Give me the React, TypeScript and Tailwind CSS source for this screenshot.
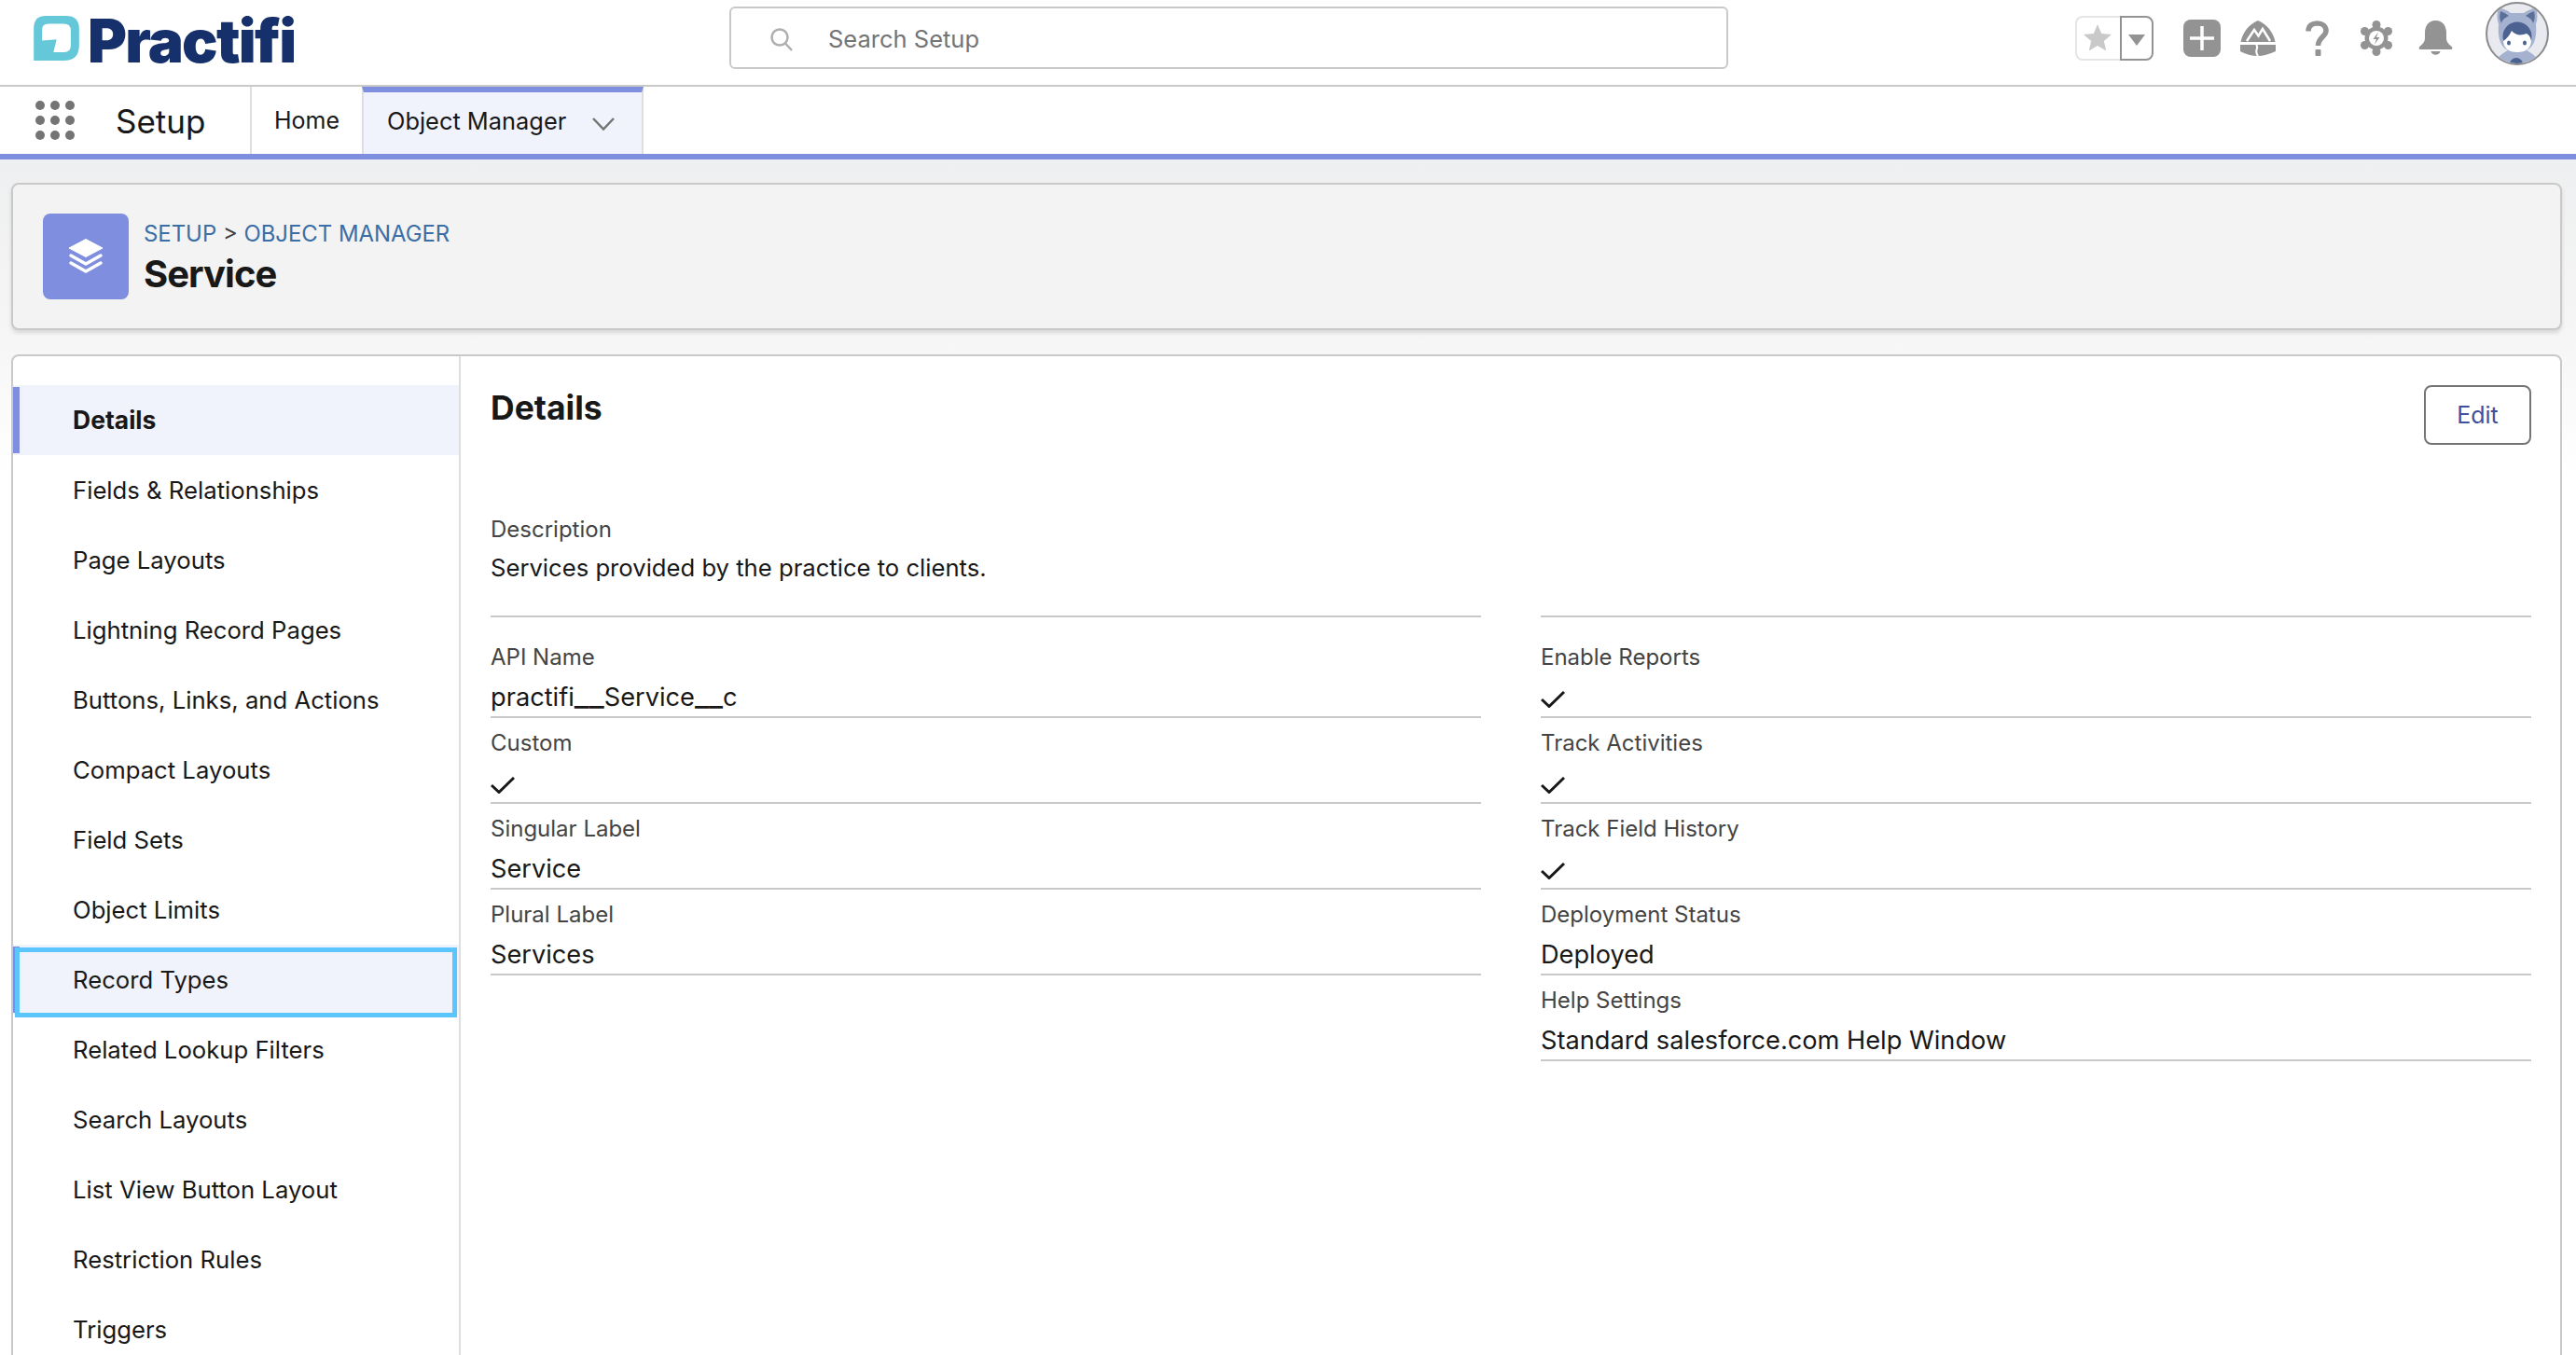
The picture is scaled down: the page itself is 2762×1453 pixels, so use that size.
import type { ReactNode } from 'react'

const sideItems = [
  'Details',
  'Fields & Relationships',
  'Page Layouts',
  'Lightning Record Pages',
  'Buttons, Links, and Actions',
  'Compact Layouts',
  'Field Sets',
  'Object Limits',
  'Record Types',
  'Related Lookup Filters',
  'Search Layouts',
  'List View Button Layout',
  'Restriction Rules',
  'Triggers',
]

const leftFields: { label: string; value?: ReactNode; check?: boolean }[] = [
  {
    label: 'API Name',
    value: (
      <>
        practifi<span className="text-[35px] leading-[0]">__</span>Service<span className="text-[33px] leading-[0]">__</span>c
      </>
    ),
  },
  { label: 'Custom', check: true },
  { label: 'Singular Label', value: 'Service' },
  { label: 'Plural Label', value: 'Services' },
]

const rightFields: { label: string; value?: ReactNode; check?: boolean }[] = [
  { label: 'Enable Reports', check: true },
  { label: 'Track Activities', check: true },
  { label: 'Track Field History', check: true },
  { label: 'Deployment Status', value: 'Deployed' },
  { label: 'Help Settings', value: 'Standard salesforce.com Help Window' },
]

const Field = ({ label, value, check }: { label: string; value?: ReactNode; check?: boolean }) => (
  <div className="h-[92px] border-b-2 border-[#c9c9c9] pt-[13px]">
    <div className="text-[24px] leading-[28px] text-[#444444]">{label}</div>
    {check ? (
      <div className="mt-[13px] flex h-[32px] items-center pt-[4px]">
        <svg width="26" height="18" viewBox="0 0 26 18" fill="none" stroke="#181818" strokeWidth="3">
          <path d="M1 9l8 7.5L25 1" />
        </svg>
      </div>
    ) : (
      <div className="mt-[13px] h-[32px] text-[27.2px] leading-[32px] text-[#181818]">{value}</div>
    )}
  </div>
)

const Logo = () => (
  <div className="flex items-start">
    <svg width="49" height="48" viewBox="0 0 147 145" className="mt-[16px] ml-[36px]">
      <path d="M0 145V40Q0 0 40 0H105Q147 0 147 42V95Q147 145 97 145Z" fill="#65c8d9" />
      <path d="M27 80V45Q27 26 48 26H98Q120 26 120 48V96Q120 118 98 118H64L74 76Z" fill="#fff" />
    </svg>
    <span className="mt-[7px] ml-[9px] text-[64px] leading-[72px] font-black tracking-[-1.75px] text-[#16306b]">Practifi</span>
  </div>
)

const Avatar = () => (
  <svg width="68" height="68" viewBox="0 0 68 68" className="mb-[9px] ml-[35px]">
    <defs>
      <clipPath id="av"><circle cx="34" cy="34" r="32" /></clipPath>
    </defs>
    <circle cx="34" cy="34" r="33" fill="#e8eaf0" stroke="#8c8c8c" strokeWidth="2" />
    <g clipPath="url(#av)">
      <path d="M14 6Q24 9 27 12H41Q45 9 54 6Q57 16 54 24Q56 46 44 52Q52 56 56 62V70H12V62Q16 56 24 52Q12 46 14 24Q11 16 14 6Z" fill="#a4b2cf" />
      <path d="M16 10Q22 12 25 15Q18 18 17 23Q14 18 16 10Z" fill="#5b6f98" />
      <path d="M52 10Q46 12 43 15Q50 18 51 23Q54 18 52 10Z" fill="#5b6f98" />
      <circle cx="34" cy="37" r="15.5" fill="#4c6290" />
      <path d="M19 42Q25 38 28 31Q34 38 44 34Q48 36 49 42Q48 54 34 54Q20 54 19 42Z" fill="#fff" />
      <ellipse cx="25" cy="44" rx="2" ry="2.6" fill="#4c6290" />
      <ellipse cx="42" cy="44" rx="2" ry="2.6" fill="#4c6290" />
      <circle cx="33" cy="67" r="7" fill="#4c6290" />
    </g>
  </svg>
)

const HeaderIcons = () => (
  <div className="flex items-center text-[#939393]">
    <div className="flex h-[48px] w-[84px]">
      <div className="flex w-[48px] items-center justify-center rounded-l-[8px] border-2 border-r-0 border-[#e5e5e5]">
        <svg width="30" height="29" viewBox="0 0 30 29" className="mr-[2px]">
          <path d="M15 0l4.2 10 10.8.9-8.2 7.1 2.5 10.6L15 23l-9.3 5.6L8.2 18 0 10.9 10.8 10z" fill="#c9c9c9" />
        </svg>
      </div>
      <div className="flex w-[36px] items-center justify-center rounded-r-[8px] border-2 border-[#939393]">
        <svg width="18" height="12" viewBox="0 0 18 12" className="mt-[4px]">
          <path d="M0 0H18L9 12Z" fill="#939393" />
        </svg>
      </div>
    </div>
    <svg width="40" height="40" viewBox="0 0 40 40" className="ml-[32px]">
      <rect width="40" height="40" rx="8" fill="#939393" />
      <path d="M20 7V33M7 20H33" stroke="#fff" strokeWidth="3.5" />
    </svg>
    <svg width="38" height="38" viewBox="0 0 38 38" className="ml-[21px]">
      <path d="M19 0C9 4 2.500 13 .5 23H37.500C35.500 13 29 4 19 0Z" fill="#939393" />
      <path d="M7 22L15 10l4.500 6.500L24 9l8 13" fill="none" stroke="#fff" strokeWidth="2.500" />
      <path d="M0 26H38V33Q27 38 19 38Q9 38 0 33Z" fill="#939393" />
      <path d="M17 26C21 30 14 31 19 38" fill="none" stroke="#fff" strokeWidth="2" />
    </svg>
    <svg width="25" height="38" viewBox="0 0 25 38" className="ml-[32px]">
      <path d="M3 11.500C3 5.500 7 3 12.500 3S22 6 22 11C22 17.500 13.500 18 13.500 27" fill="none" stroke="#939393" strokeWidth="5.500" />
      <rect x="10.500" y="31" width="6" height="7" rx="1" fill="#939393" />
    </svg>
    <svg width="34" height="38" viewBox="0 0 34 38" className="ml-[34px]">
      <circle cx="17" cy="19" r="12.500" fill="#939393" />
      <circle cx="17" cy="4.500" r="4.500" fill="#939393" />
      <circle cx="17" cy="33.500" r="4.500" fill="#939393" />
      <circle cx="4.500" cy="11.500" r="4.500" fill="#939393" />
      <circle cx="29.500" cy="11.500" r="4.500" fill="#939393" />
      <circle cx="4.500" cy="26.500" r="4.500" fill="#939393" />
      <circle cx="29.500" cy="26.500" r="4.500" fill="#939393" />
      <circle cx="17" cy="19" r="8" fill="#fff" />
      <path d="M19 12.500L13.500 20H17L15 25.500L20.500 18H17Z" fill="#939393" />
    </svg>
    <svg width="37" height="37" viewBox="0 0 37 37" className="ml-[28px]">
      <path d="M18.500 0C10 0 7 7 7 13V19C7 24 3 26 1 28.500Q0 31 2 31H35Q37 31 36 28.500C34 26 30 24 30 19V13C30 7 27 0 18.500 0Z" fill="#939393" />
      <path d="M13.500 33H23.500C22.500 38 14.500 38 13.500 33Z" fill="#939393" />
    </svg>
    <Avatar />
  </div>
)

const App = () => {
  return (
    <div className="h-[1453px] w-[2762px] overflow-hidden bg-white font-['Inter',sans-serif] text-[#181818]">
      {/* top bar */}
      <header className="flex h-[93px] items-center justify-between border-b-2 border-[#c9c9c9] pb-[10px]">
        <div className="flex w-[782px]">
          <Logo />
        </div>
        <div className="flex h-[67px] w-[1071px] items-center rounded-[6px] border-2 border-[#c9c9c9] pt-[3px] pl-[41px]">
          <svg width="26" height="26" viewBox="0 0 26 26" fill="none" stroke="#aeaeae" strokeWidth="2.500">
            <circle cx="11" cy="11" r="8.500" />
            <path d="M17 17.500L24 25" />
          </svg>
          <span className="ml-[37px] text-[25.500px] text-[#747474]">Search Setup</span>
        </div>
        <div className="flex-1 pr-[29px]">
          <div className="flex justify-end">
            <HeaderIcons />
          </div>
        </div>
      </header>

      {/* app nav */}
      <nav className="flex h-[78px] border-b-[6px] border-[#7f8ede]">
        <div className="flex w-[268px] items-center">
          <div className="ml-[38px] grid grid-cols-3 gap-x-[6px] gap-y-[6px]">
            {Array.from({ length: 9 }).map((_, i) => (
              <span key={i} className="size-[10px] rounded-full bg-[#747474]" />
            ))}
          </div>
          <span className="mt-[2px] ml-[44px] text-[35px] leading-none">Setup</span>
        </div>
        <a className="flex w-[120px] items-center border-l-2 border-[#dedede] pt-[2px] pl-[24px] text-[25px]">Home</a>
        <a className="flex w-[302px] items-center border-x-2 border-t-[6px] border-x-[#dedede] border-t-[#7f8ede] bg-[#f0f3fb] pb-[4px] pl-[25px] text-[25.400px]">
          Object Manager
          <svg width="24" height="14" viewBox="0 0 24 14" fill="none" stroke="#747474" strokeWidth="2.500" className="mt-[6px] ml-[28px]">
            <path d="M1 1l11 11.500L23 1" />
          </svg>
        </a>
      </nav>

      <main className="h-[1282px] bg-[linear-gradient(#eeeff0_0px,#f6f6f6_200px,#ffffff_340px)] px-[12px] pt-[25px]">
        {/* object header */}
        <section className="flex h-[158px] w-[2735px] items-center rounded-[8px] border-2 border-[#c9c9c9] bg-[#f3f3f3] pl-[32px] shadow-[0_3px_4px_rgba(0,0,0,0.12)]">
          <div className="flex size-[92px] items-center justify-center rounded-[8px] bg-[#7f8ede]">
            <svg width="38" height="38" viewBox="0 0 38 38" fill="none">
              <path d="M19 .5L37 10 19 19.500 1 10Z" fill="#fff" stroke="#fff" strokeLinejoin="round" />
              <path d="M3 18L19 27 35 18M3 26L19 35 35 26" stroke="#fff" strokeWidth="3.500" strokeLinecap="round" strokeLinejoin="round" />
            </svg>
          </div>
          <div className="ml-[16px] pt-[2px]">
            <div className="text-[23.900px] leading-[36px] text-[#3a6ea5]">
              SETUP <span className="text-[#3e3e3c]">&gt;</span> OBJECT MANAGER
            </div>
            <h1 className="text-[40px] leading-[50px] font-bold tracking-[-0.95px]">Service</h1>
          </div>
        </section>

        {/* details card */}
        <section className="mt-[26px] flex h-[1200px] w-[2735px] rounded-[8px] border-2 border-[#c9c9c9] bg-white">
          <aside className="relative w-[480px] border-r-2 border-[#dedede] pt-[31px]">
            {sideItems.map((item, i) => (
              <div
                key={item}
                className={`relative flex h-[75px] items-center pt-[1px] pl-[64px] ${i === 0 ? 'bg-[#f0f3fb] text-[26.500px] font-bold' : 'text-[25.700px]'} ${i === 8 ? 'bg-[#f0f3fb]' : ''}`}
              >
                {(i === 0 || i === 8) && <span className="absolute top-[2px] bottom-[2px] left-0 w-[7px] bg-[#7f8ede]" />}
                {i === 8 && <span className="absolute top-[3px] right-[2px] left-[2px] h-[75px] border-[5px] border-[#5bc6fd]" />}
                <span className="relative">{item}</span>
              </div>
            ))}
          </aside>

          <div className="flex-1 pt-[31px] pr-[31px] pl-[32px]">
            <div className="flex items-start justify-between">
              <h2 className="pt-[2px] text-[35.500px] leading-[46px] font-bold">Details</h2>
              <button className="h-[64px] w-[115px] rounded-[8px] border-2 border-[#747474] pt-[2px] text-[25px] text-[#3d4f9f]">Edit</button>
            </div>
            <div className="mt-[77px] grid grid-cols-2 gap-x-[64px]">
              <div className="h-[108px] border-b-2 border-[#c9c9c9]">
                <div className="text-[24px] leading-[28px] text-[#444444]">Description</div>
                <div className="mt-[11px] text-[25.650px] leading-[32px]">Services provided by the practice to clients.</div>
              </div>
              <div className="h-[108px] border-b-2 border-[#c9c9c9]" />
            </div>
            <div className="mt-[16px] grid grid-cols-2 gap-x-[64px]">
              <div>
                {leftFields.map((f) => (
                  <Field key={f.label} {...f} />
                ))}
              </div>
              <div>
                {rightFields.map((f) => (
                  <Field key={f.label} {...f} />
                ))}
              </div>
            </div>
          </div>
        </section>
      </main>
    </div>
  )
}

export default App
